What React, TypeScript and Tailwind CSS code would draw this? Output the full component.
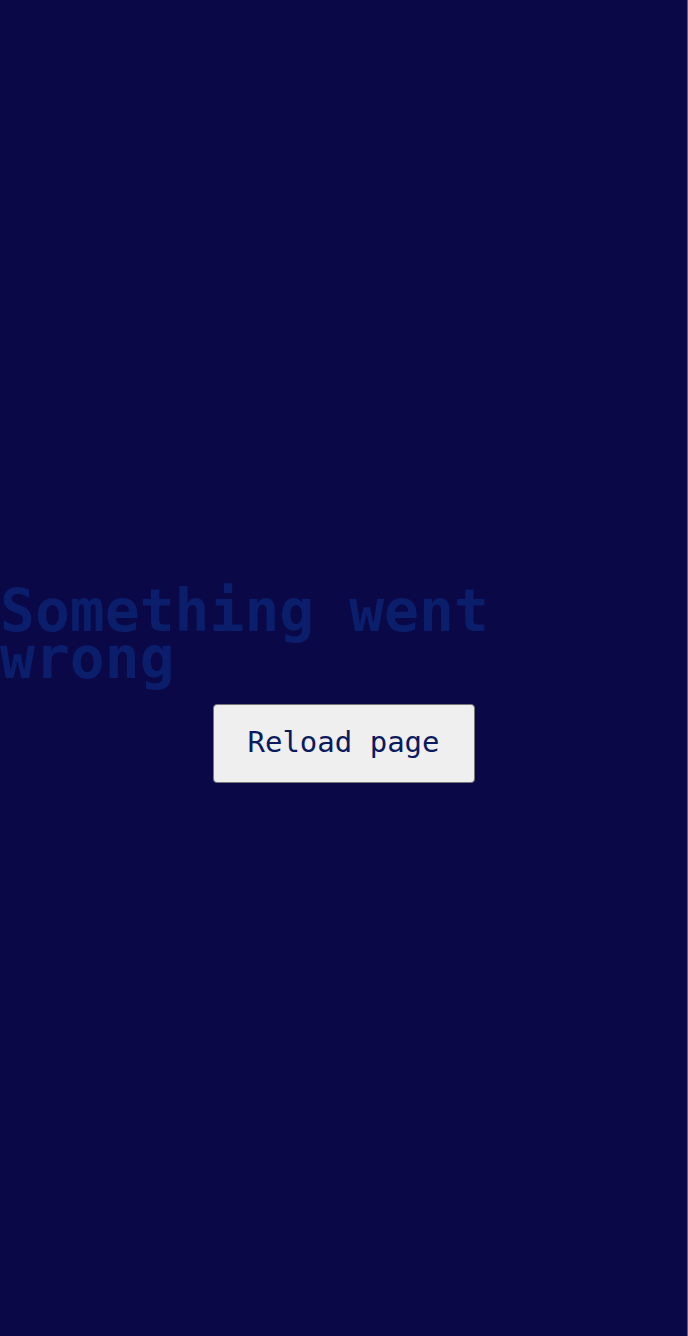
export default function App() {
  return (
    <div className="flex min-h-screen flex-col items-center justify-center border-r border-[#5c5c8c] bg-[#0a0846] pt-[34px] font-['DejaVu_Sans_Mono',monospace]">
      <h1 className="w-full text-left text-[58px] font-bold leading-[47px] text-[#0b1e6c]">
        Something went wrong
      </h1>
      <button className="mt-[22px] h-[79px] w-[262px] rounded-[4px] border border-[#767676] bg-[#efefef] text-[29px] text-[#0a1a5e]">
        Reload page
      </button>
    </div>
  );
}
